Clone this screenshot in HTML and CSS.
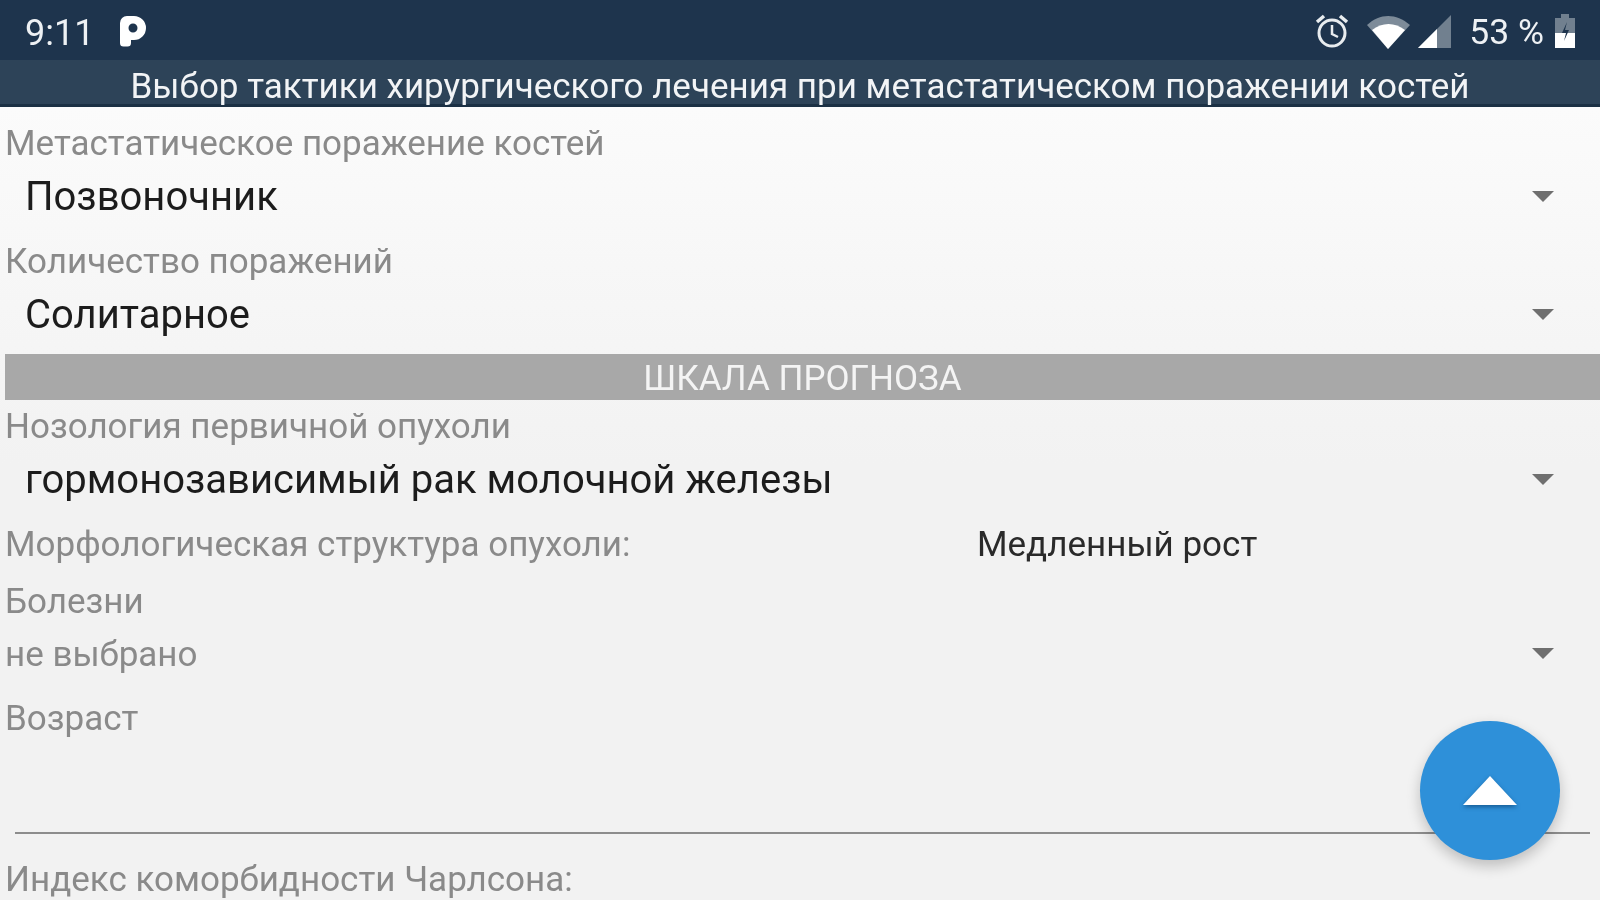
FILE: index.html
```html
<!DOCTYPE html>
<html lang="ru">
<head>
<meta charset="utf-8">
<title>Выбор тактики</title>
<link rel="stylesheet" href="styles.css">
</head>
<body>
<div class="screen">
  <header class="status">
    <div class="status-left">
      <span class="time">9:11</span>
      <svg class="p-icon" viewBox="0 0 28 32" width="28" height="32"><path fill-rule="evenodd" fill="#fff" d="M1 8a7 7 0 0 1 7-7h7a12 12 0 0 1 0 24h-3v3a3.500 3.500 0 0 1-3.500 3.500h-4a3.500 3.500 0 0 1-3.500-3.500zM14 8.500a4.500 4.500 0 1 0 .01 9 4.500 4.500 0 0 0-.01-9z"/></svg>
    </div>
    <div class="status-right">
      <svg class="alarm" viewBox="0 0 36 36" width="36" height="36"><circle cx="18" cy="20" r="13" fill="none" stroke="#e8ecef" stroke-width="3"/><path d="M18 12v9l6 3" fill="none" stroke="#e8ecef" stroke-width="2.500"/><path d="M3 9l7-6M33 9l-7-6" stroke="#e8ecef" stroke-width="3.500" fill="none"/></svg>
      <svg class="wifi" viewBox="0 0 46 36" width="46" height="36"><path d="M2 12C15 0 31 0 45 12L23 36z" fill="#7d8b99"/><path d="M7 17C17 9 30 9 40 17L23 36z" fill="#fff"/></svg>
      <svg class="signal" viewBox="0 0 36 36" width="36" height="36"><path d="M35 2V35H2z" fill="#71808f"/><path d="M21 16V35H2z" fill="#fff"/></svg>
      <span class="battery-text">53 %</span>
      <svg class="battery" viewBox="0 0 24 36" width="24" height="36"><path d="M8 1h8v4h6v30H2V5h6z" fill="#71808f"/><path d="M2 20h20v15H2z" fill="#fff"/><path d="M14 9l-5 11h4l-2 8 5-11h-4z" fill="#1e344d"/></svg>
    </div>
  </header>
  <div class="titlebar">Выбор тактики хирургического лечения при метастатическом поражении костей</div>
  <main class="content">
    <div class="label label-first">Метастатическое поражение костей</div>
    <div class="spinner"><span class="value">Позвоночник</span><span class="caret"></span></div>
    <div class="label">Количество поражений</div>
    <div class="spinner"><span class="value">Солитарное</span><span class="caret"></span></div>
    <div class="section">ШКАЛА ПРОГНОЗА</div>
    <div class="label label-tight">Нозология первичной опухоли</div>
    <div class="spinner"><span class="value">гормонозависимый рак молочной железы</span><span class="caret"></span></div>
    <div class="info-row"><span class="label-inline">Морфологическая структура опухоли:</span><span class="info-value">Медленный рост</span></div>
    <div class="label">Болезни</div>
    <div class="spinner spinner-muted"><span class="muted-value">не выбрано</span><span class="caret"></span></div>
    <div class="label">Возраст</div>
    <div class="input-line"></div>
    <div class="label label-last">Индекс коморбидности Чарлсона:</div>
  </main>
  <button class="fab" type="button" aria-label="Наверх"><span class="fab-arrow"></span></button>
</div>
</body>
</html>
```
FILE: styles.css
```css
* { box-sizing: border-box; }
html, body { margin: 0; padding: 0; }
body { width: 1600px; height: 900px; overflow: hidden; font-family: Roboto, "Liberation Sans", sans-serif; }
.screen { position: relative; width: 1600px; height: 900px; display: flex; flex-direction: column; overflow: hidden; background: #f2f2f2; filter: blur(0.7px); }
.status { flex: none; height: 60px; background: #1e344d; display: flex; justify-content: space-between; align-items: center; padding: 2px 23px 0 25px; color: #eef1f4; }
.status-left { display: flex; align-items: center; gap: 25px; }
.time { font-size: 36px; line-height: 1; padding-top: 4px; }
.p-icon { display: block; }
.status-right { display: flex; align-items: center; }
.alarm { margin-right: 15px; }
.wifi { margin-right: 5px; }
.signal { margin-right: 17px; }
.battery-text { font-size: 35.500px; line-height: 1; margin-right: 9px; padding-top: 4px; }
.titlebar { flex: none; height: 47px; background: #2d4358; border-bottom: 3px solid #1b3044; color: #f2f4f6; font-size: 35px; line-height: 53px; text-align: center; white-space: nowrap; }
.content { flex: 1; background: linear-gradient(#fbfbfb, #f2f2f2 45%); padding-left: 5px; overflow: hidden; }
.label { font-size: 35px; line-height: 40px; color: #8a8a8a; white-space: nowrap; }
.label-first { margin-top: 17px; }
.label-tight { margin-top: 7px; }
.spinner { height: 78px; display: flex; align-items: center; justify-content: space-between; padding: 0 46px 12px 20px; }
.value { font-size: 40px; line-height: 1; color: #1c1c1c; }
.spinner-muted { padding-left: 0; height: 78px; margin-top: -1px; }
.muted-value { font-size: 35px; line-height: 1; color: #8a8a8a; }
.caret { width: 0; height: 0; margin-bottom: 2px; border-left: 11.500px solid transparent; border-right: 11.500px solid transparent; border-top: 11.500px solid #6f6f6f; }
.section { height: 46px; margin-top: -6px; background: #a8a8a8; color: #f4f4f4; font-size: 35px; line-height: 50px; text-align: center; }
.info-row { display: flex; height: 46px; align-items: center; margin-top: -4px; margin-bottom: 15px; }
.label-inline { width: 972px; font-size: 35px; color: #8a8a8a; white-space: nowrap; }
.info-value { font-size: 35px; color: #2a2a2a; white-space: nowrap; }
.input-line { height: 2px; margin: 93px 10px 0 10px; background: #8d8d8d; }
.label-last { margin-top: 26px; }
.fab { position: absolute; left: 1420px; top: 721px; width: 140px; height: 139px; border: 0; padding: 0; border-radius: 50%; background: #2e90d9; box-shadow: 0 6px 14px rgba(0,0,0,.22); display: flex; align-items: center; justify-content: center; }
.fab-arrow { width: 0; height: 0; border-left: 27px solid transparent; border-right: 27px solid transparent; border-bottom: 29px solid #fff; filter: drop-shadow(0 2px 2px rgba(0,40,80,.5)); }
```
